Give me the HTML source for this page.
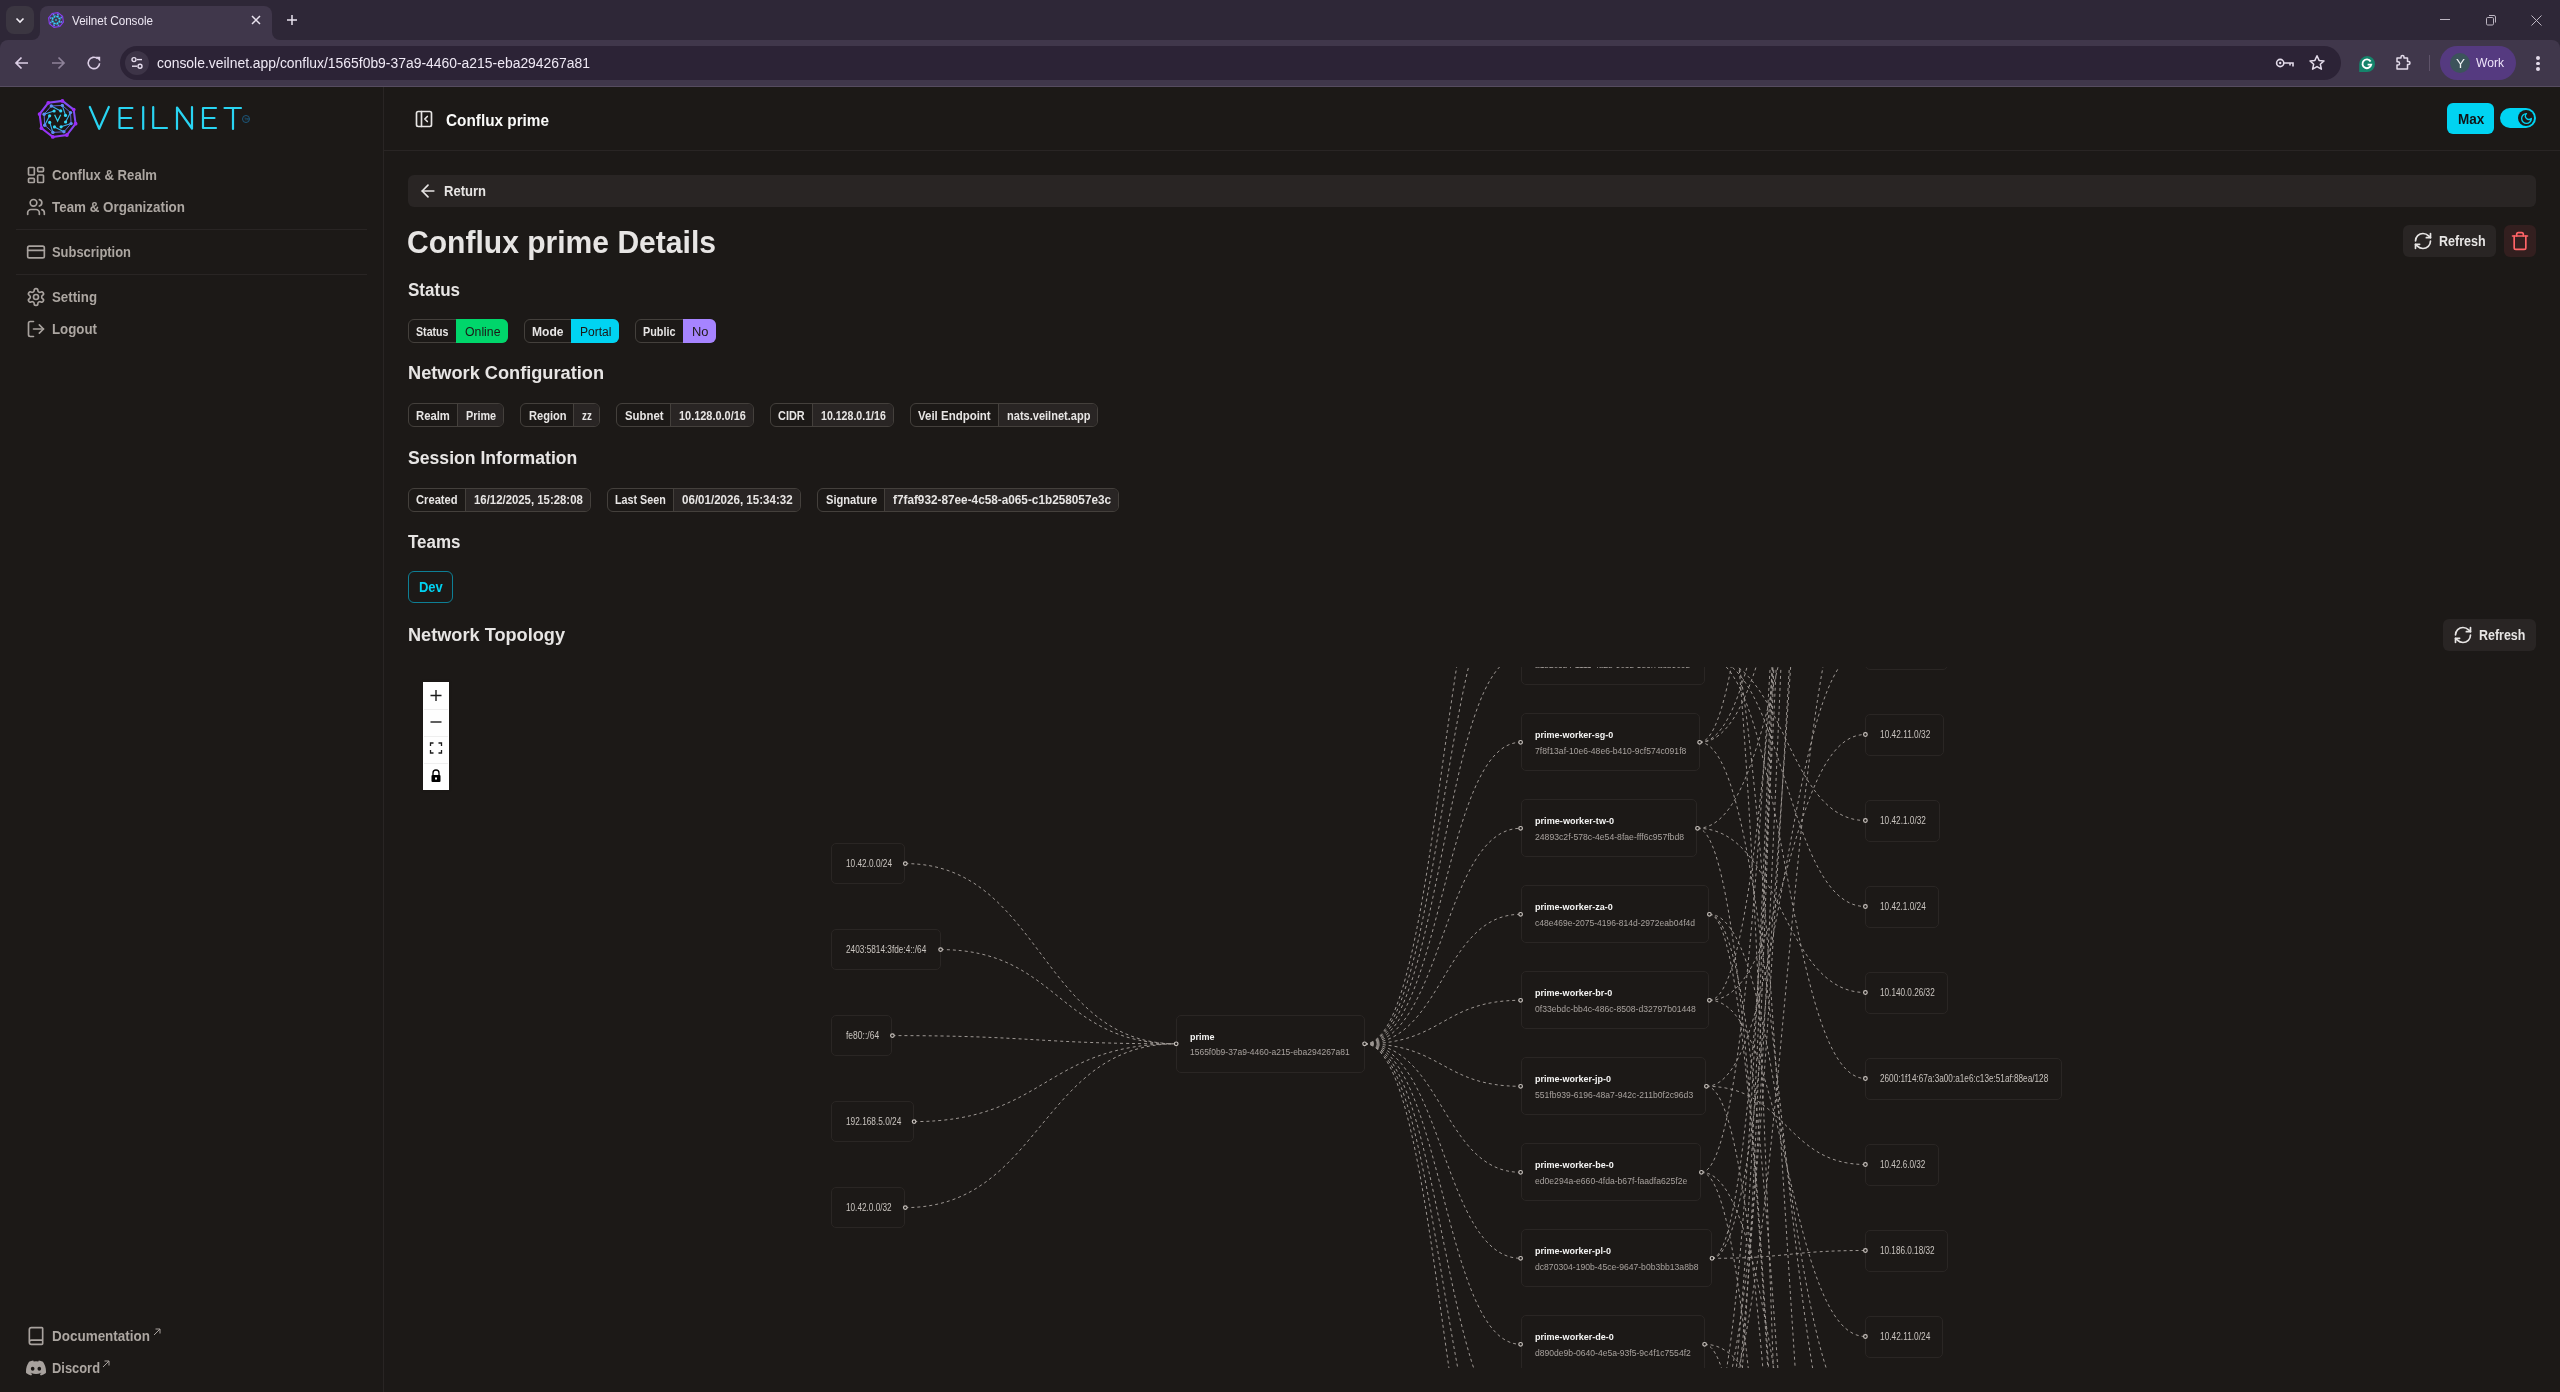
<!DOCTYPE html><html><head><meta charset="utf-8"><title>Veilnet Console</title><style>html,body{margin:0;padding:0;width:2560px;height:1392px;overflow:hidden;background:#1c1917;font-family:"Liberation Sans",sans-serif}</style></head><body><div style="position:absolute;left:0;top:0;width:2560px;height:1392px;will-change:transform"><div style="position:absolute;left:0;top:0;width:2560px;height:48px;background:#2e2737"></div>
<div style="position:absolute;left:0;top:40px;width:2560px;height:47px;background:#40374b;border-radius:8px 8px 0 0"></div>
<div style="position:absolute;left:40px;top:6px;width:232px;height:40px;background:#40374b;border-radius:8px 8px 0 0"></div>
<div style="position:absolute;left:32px;top:32px;width:8px;height:8px;background:#40374b"></div><div style="position:absolute;left:32px;top:32px;width:8px;height:8px;background:#2e2737;border-radius:0 0 8px 0"></div>
<div style="position:absolute;left:272px;top:32px;width:8px;height:8px;background:#40374b"></div><div style="position:absolute;left:272px;top:32px;width:8px;height:8px;background:#2e2737;border-radius:0 0 0 8px"></div>
<div style="position:absolute;left:6px;top:6px;width:28px;height:28px;border-radius:8px;background:#3b3641"></div>
<svg style="position:absolute;left:14px;top:14px" width="12" height="12" viewBox="0 0 12 12"><path d="M2.5 4.5 L6 8 L9.5 4.5" fill="none" stroke="#f2eef6" stroke-width="1.6"/></svg>
<svg style="position:absolute;left:0;top:0" width="100" height="40" viewBox="0 0 100 40"><polygon points="58.0,12.6 62.6,16.2 63.4,22.0 59.8,26.6 54.0,27.4 49.4,23.8 48.6,18.0 52.2,13.4" fill="none" stroke="#8a3cf5" stroke-width="1.1"/><path d="M54.6 16.8 L50.5 18.1" stroke="#3bb0f0" stroke-width="0.7"/><path d="M57.3 16.7 L53.4 14.7" stroke="#3bb0f0" stroke-width="0.7"/><path d="M59.2 18.6 L57.9 14.5" stroke="#3bb0f0" stroke-width="0.7"/><path d="M59.3 21.3 L61.3 17.4" stroke="#3bb0f0" stroke-width="0.7"/><path d="M57.4 23.2 L61.5 21.9" stroke="#3bb0f0" stroke-width="0.7"/><path d="M54.7 23.3 L58.6 25.3" stroke="#3bb0f0" stroke-width="0.7"/><path d="M52.8 21.4 L54.1 25.5" stroke="#3bb0f0" stroke-width="0.7"/><path d="M52.7 18.7 L50.7 22.6" stroke="#3bb0f0" stroke-width="0.7"/><circle cx="53.4" cy="14.7" r="0.9" fill="#5e8ef5"/><circle cx="57.9" cy="14.5" r="0.9" fill="#5e8ef5"/><circle cx="61.3" cy="17.4" r="0.9" fill="#5e8ef5"/><circle cx="61.5" cy="21.9" r="0.9" fill="#5e8ef5"/><circle cx="58.6" cy="25.3" r="0.9" fill="#5e8ef5"/><circle cx="54.1" cy="25.5" r="0.9" fill="#5e8ef5"/><circle cx="50.7" cy="22.6" r="0.9" fill="#5e8ef5"/><circle cx="50.5" cy="18.1" r="0.9" fill="#5e8ef5"/><circle cx="54.6" cy="16.8" r="0.9" fill="#33d9f6"/><circle cx="57.3" cy="16.7" r="0.9" fill="#33d9f6"/><circle cx="59.2" cy="18.6" r="0.9" fill="#33d9f6"/><circle cx="59.3" cy="21.3" r="0.9" fill="#33d9f6"/><circle cx="57.4" cy="23.2" r="0.9" fill="#33d9f6"/><circle cx="54.7" cy="23.3" r="0.9" fill="#33d9f6"/><circle cx="52.8" cy="21.4" r="0.9" fill="#33d9f6"/><circle cx="52.7" cy="18.7" r="0.9" fill="#33d9f6"/><circle cx="56" cy="20" r="1" fill="#2fb0d0"/></svg>
<span style="position:absolute;left:72.0px;top:14.80px;font-family:'Liberation Sans',sans-serif;font-size:12px;font-weight:400;line-height:1;color:#ece6f2;white-space:pre;transform-origin:0 0;transform:scaleX(0.9713)">Veilnet Console</span>
<svg style="position:absolute;left:251px;top:15px" width="10" height="10" viewBox="0 0 10 10"><path d="M1 1 L9 9 M9 1 L1 9" stroke="#e9e3ef" stroke-width="1.5"/></svg>
<svg style="position:absolute;left:286px;top:14px" width="12" height="12" viewBox="0 0 12 12"><path d="M6 1 V11 M1 6 H11" stroke="#e9e3ef" stroke-width="1.5"/></svg>
<div style="position:absolute;left:2440px;top:19px;width:10px;height:1px;background:#bdb6c2"></div>
<svg style="position:absolute;left:2484px;top:13px" width="14" height="14" viewBox="0 0 14 14"><rect x="2.5" y="4.5" width="7" height="7.5" rx="1.2" fill="none" stroke="#bdb6c2" stroke-width="1"/><path d="M5 2.5 H10 Q11.5 2.5 11.5 4 V9.5" fill="none" stroke="#bdb6c2" stroke-width="1"/></svg>
<svg style="position:absolute;left:2530px;top:14px" width="13" height="13" viewBox="0 0 13 13"><path d="M1.5 1.5 L11.5 11.5 M11.5 1.5 L1.5 11.5" stroke="#bdb6c2" stroke-width="1"/></svg>
<svg style="position:absolute;left:13px;top:54px" width="18" height="18" viewBox="0 0 18 18"><path d="M15 9 H3.5 M8.5 3.5 L3 9 L8.5 14.5" fill="none" stroke="#dccfe6" stroke-width="1.7"/></svg>
<svg style="position:absolute;left:49px;top:54px" width="18" height="18" viewBox="0 0 18 18"><path d="M3 9 H14.5 M9.5 3.5 L15 9 L9.5 14.5" fill="none" stroke="#8e8299" stroke-width="1.7"/></svg>
<svg style="position:absolute;left:85px;top:54px" width="18" height="18" viewBox="0 0 18 18"><path d="M14.6 9.2 A5.7 5.7 0 1 1 12.6 4.6" fill="none" stroke="#dccfe6" stroke-width="1.6"/><path d="M10.6 2.8 H15.2 V7.4 Z" fill="#dccfe6"/></svg>
<div style="position:absolute;left:120px;top:46px;width:2221px;height:34px;border-radius:17px;background:#2c2336"></div>
<div style="position:absolute;left:125px;top:51px;width:24px;height:24px;border-radius:12px;background:#3d3447"></div>
<svg style="position:absolute;left:129px;top:55px" width="16" height="16" viewBox="0 0 16 16"><circle cx="5" cy="4.6" r="2" fill="none" stroke="#e6ddee" stroke-width="1.4"/><path d="M8 4.6 H13" stroke="#e6ddee" stroke-width="1.4"/><circle cx="11" cy="11.2" r="2" fill="none" stroke="#e6ddee" stroke-width="1.4"/><path d="M3 11.2 H8" stroke="#e6ddee" stroke-width="1.4"/></svg>
<span style="position:absolute;left:157.0px;top:56.10px;font-family:'Liberation Sans',sans-serif;font-size:14px;font-weight:400;line-height:1;color:#efe9f5;white-space:pre;transform-origin:0 0;transform:scaleX(0.9933)">console.veilnet.app/conflux/1565f0b9-37a9-4460-a215-eba294267a81</span>
<svg style="position:absolute;left:2275px;top:55px" width="20" height="16" viewBox="0 0 20 16"><circle cx="5.2" cy="8" r="3.6" fill="none" stroke="#e3dbea" stroke-width="1.6"/><circle cx="5.2" cy="8" r="1.2" fill="#e3dbea"/><path d="M8.8 8 H18 V11.5 M15 8 V10.5" fill="none" stroke="#e3dbea" stroke-width="1.6"/></svg>
<svg style="position:absolute;left:2308px;top:54px" width="18" height="18" viewBox="0 0 18 18"><path d="M9 1.8 L11.1 6.4 L16 6.9 L12.3 10.2 L13.4 15.2 L9 12.6 L4.6 15.2 L5.7 10.2 L2 6.9 L6.9 6.4 Z" fill="none" stroke="#e3dbea" stroke-width="1.5" stroke-linejoin="round"/></svg>
<svg style="position:absolute;left:2358px;top:55px" width="18" height="18" viewBox="0 0 18 18"><path d="M9 1 A8 8 0 1 1 9 17 H1.2 V9 A8 8 0 0 1 9 1 Z" fill="#15846b"/><path d="M12.6 6.4 A4.4 4.4 0 1 0 13.2 9.6 H9.6" fill="none" stroke="#fff" stroke-width="1.9"/></svg>
<svg style="position:absolute;left:2394px;top:54px" width="18" height="18" viewBox="0 0 18 18"><path d="M3 4 H7 V3 A1.5 1.5 0 0 1 10 3 V4 H13.5 V7.5 H14.5 A1.5 1.5 0 0 1 14.5 10.5 H13.5 V15 H3 V11 H4 A1.6 1.6 0 0 0 4 7.8 H3 Z" fill="none" stroke="#e3dbea" stroke-width="1.5" stroke-linejoin="round"/></svg>
<div style="position:absolute;left:2429px;top:55px;width:1px;height:16px;background:#5e5369"></div>
<div style="position:absolute;left:2440px;top:46px;width:76px;height:34px;border-radius:17px;background:#553a80"></div>
<div style="position:absolute;left:2450px;top:53px;width:20px;height:20px;border-radius:10px;background:#3c535b"></div>
<span style="position:absolute;left:2455.5px;top:57.80px;font-family:'Liberation Sans',sans-serif;font-size:12px;font-weight:400;line-height:1;color:#eef2f4;white-space:pre;transform-origin:0 0;transform:scaleX(1.1228)">Y</span>
<span style="position:absolute;left:2476.0px;top:56.45px;font-family:'Liberation Sans',sans-serif;font-size:13px;font-weight:400;line-height:1;color:#eee4fa;white-space:pre;transform-origin:0 0;transform:scaleX(0.9299)">Work</span>
<div style="position:absolute;left:2536px;top:56px;width:3.5px;height:3.5px;border-radius:2px;background:#e3dbea"></div><div style="position:absolute;left:2536px;top:61.5px;width:3.5px;height:3.5px;border-radius:2px;background:#e3dbea"></div><div style="position:absolute;left:2536px;top:67px;width:3.5px;height:3.5px;border-radius:2px;background:#e3dbea"></div>
<div style="position:absolute;left:0;top:86px;width:2560px;height:1px;background:#564c60"></div>
<div style="position:absolute;left:0;top:87px;width:2560px;height:1305px;background:#1c1917"></div>
<div style="position:absolute;left:383px;top:87px;width:1px;height:1305px;background:#292524"></div>
<div style="position:absolute;left:384px;top:150px;width:2176px;height:1px;background:#292524"></div>
<svg style="position:absolute;left:0;top:87px" width="383" height="70" viewBox="0 87 383 70">
<g fill="none" stroke="#29d4f2" stroke-width="2.2" stroke-linecap="round" stroke-linejoin="round">
<path d="M89.8 107 L99.2 128.8 L108.8 107"/>
<path d="M132.4 108 H119.5 V128 H132.4 M119.5 118 H131"/>
<path d="M143.2 107 V129"/>
<path d="M153.2 107 V128 H167"/>
<path d="M177 129 V107.5 L192 128.5 V107"/>
<path d="M216 108 H203 V128 H216 M203 118 H214.5"/>
<path d="M224.5 108 H241 M233 108 V129"/>
</g>
<circle cx="246" cy="119" r="3.5" fill="none" stroke="#1d5f86" stroke-width="0.9"/><path d="M244.3 118 H246.3 M245.3 118 V120.5 M246.8 120.5 V118 L247.6 119.5 L248.2 118 V120.5" fill="none" stroke="#1d5f86" stroke-width="0.5"/>
</svg>
<svg style="position:absolute;left:0;top:87px" width="100" height="70" viewBox="0 87 100 70"><defs><linearGradient id="lg" x1="0" y1="1" x2="1" y2="0"><stop offset="0" stop-color="#9d2cf7"/><stop offset="1" stop-color="#7a55f4"/></linearGradient></defs><polygon points="62.4,100.9 73.7,109.6 75.6,123.7 66.9,135.0 52.8,136.9 41.5,128.2 39.6,114.1 48.3,102.8" fill="none" stroke="url(#lg)" stroke-width="2"/><polygon points="51.3,106.0 62.3,105.4 70.5,112.6 71.1,123.6 63.9,131.8 52.9,132.4 44.7,125.2 44.1,114.2" fill="none" stroke="#6a6df2" stroke-width="0.9"/><circle cx="62.4" cy="100.9" r="1.9" fill="#9d2cf7"/><circle cx="73.7" cy="109.6" r="1.9" fill="#9d2cf7"/><circle cx="75.6" cy="123.7" r="1.9" fill="#9d2cf7"/><circle cx="66.9" cy="135.0" r="1.9" fill="#9d2cf7"/><circle cx="52.8" cy="136.9" r="1.9" fill="#9d2cf7"/><circle cx="41.5" cy="128.2" r="1.9" fill="#9d2cf7"/><circle cx="39.6" cy="114.1" r="1.9" fill="#9d2cf7"/><circle cx="48.3" cy="102.8" r="1.9" fill="#9d2cf7"/><path d="M54.1 111.0 L44.1 114.2" fill="none" stroke="#3bb0f0" stroke-width="1.1"/><path d="M60.7 110.9 L51.3 106.0" fill="none" stroke="#3bb0f0" stroke-width="1.1"/><path d="M65.5 115.4 L62.3 105.4" fill="none" stroke="#3bb0f0" stroke-width="1.1"/><path d="M65.6 122.0 L70.5 112.6" fill="none" stroke="#3bb0f0" stroke-width="1.1"/><path d="M61.1 126.8 L71.1 123.6" fill="none" stroke="#3bb0f0" stroke-width="1.1"/><path d="M54.5 126.9 L63.9 131.8" fill="none" stroke="#3bb0f0" stroke-width="1.1"/><path d="M49.7 122.4 L52.9 132.4" fill="none" stroke="#3bb0f0" stroke-width="1.1"/><path d="M49.6 115.8 L44.7 125.2" fill="none" stroke="#3bb0f0" stroke-width="1.1"/><circle cx="51.3" cy="106.0" r="1.7" fill="#5e8ef5"/><circle cx="62.3" cy="105.4" r="1.7" fill="#5e8ef5"/><circle cx="70.5" cy="112.6" r="1.7" fill="#5e8ef5"/><circle cx="71.1" cy="123.6" r="1.7" fill="#5e8ef5"/><circle cx="63.9" cy="131.8" r="1.7" fill="#5e8ef5"/><circle cx="52.9" cy="132.4" r="1.7" fill="#5e8ef5"/><circle cx="44.7" cy="125.2" r="1.7" fill="#5e8ef5"/><circle cx="44.1" cy="114.2" r="1.7" fill="#5e8ef5"/><circle cx="54.1" cy="111.0" r="1.6" fill="#33d9f6"/><circle cx="60.7" cy="110.9" r="1.6" fill="#33d9f6"/><circle cx="65.5" cy="115.4" r="1.6" fill="#33d9f6"/><circle cx="65.6" cy="122.0" r="1.6" fill="#33d9f6"/><circle cx="61.1" cy="126.8" r="1.6" fill="#33d9f6"/><circle cx="54.5" cy="126.9" r="1.6" fill="#33d9f6"/><circle cx="49.7" cy="122.4" r="1.6" fill="#33d9f6"/><circle cx="49.6" cy="115.8" r="1.6" fill="#33d9f6"/><path d="M54.6 114.8 L57.6 121.1 L60.7 114.8" fill="none" stroke="#2fd0ee" stroke-width="1.2"/></svg>
<svg style="position:absolute;left:26px;top:165px" width="20" height="20" viewBox="0 0 24 24" fill="none" stroke="#a8a29e" stroke-width="2" stroke-linecap="round" stroke-linejoin="round"><rect width="7" height="9" x="3" y="3" rx="1"/><rect width="7" height="5" x="14" y="3" rx="1"/><rect width="7" height="9" x="14" y="12" rx="1"/><rect width="7" height="5" x="3" y="16" rx="1"/></svg>
<span style="position:absolute;left:52.0px;top:168.10px;font-family:'Liberation Sans',sans-serif;font-size:14px;font-weight:700;line-height:1;color:#aca6a1;white-space:pre;transform-origin:0 0;transform:scaleX(0.9374)">Conflux &amp; Realm</span>
<svg style="position:absolute;left:26px;top:197px" width="20" height="20" viewBox="0 0 24 24" fill="none" stroke="#a8a29e" stroke-width="2" stroke-linecap="round" stroke-linejoin="round"><path d="M16 21v-2a4 4 0 0 0-4-4H6a4 4 0 0 0-4 4v2"/><circle cx="9" cy="7" r="4"/><path d="M22 21v-2a4 4 0 0 0-3-3.87"/><path d="M16 3.13a4 4 0 0 1 0 7.75"/></svg>
<span style="position:absolute;left:52.0px;top:200.10px;font-family:'Liberation Sans',sans-serif;font-size:14px;font-weight:700;line-height:1;color:#aca6a1;white-space:pre;transform-origin:0 0;transform:scaleX(0.9569)">Team &amp; Organization</span>
<div style="position:absolute;left:16px;top:229px;width:351px;height:1px;background:#292524"></div>
<svg style="position:absolute;left:26px;top:242px" width="20" height="20" viewBox="0 0 24 24" fill="none" stroke="#a8a29e" stroke-width="2" stroke-linecap="round" stroke-linejoin="round"><rect width="20" height="14" x="2" y="5" rx="2"/><line x1="2" x2="22" y1="10" y2="10"/></svg>
<span style="position:absolute;left:52.0px;top:245.10px;font-family:'Liberation Sans',sans-serif;font-size:14px;font-weight:700;line-height:1;color:#aca6a1;white-space:pre;transform-origin:0 0;transform:scaleX(0.9233)">Subscription</span>
<div style="position:absolute;left:16px;top:274px;width:351px;height:1px;background:#292524"></div>
<svg style="position:absolute;left:26px;top:287px" width="20" height="20" viewBox="0 0 24 24" fill="none" stroke="#a8a29e" stroke-width="2" stroke-linecap="round" stroke-linejoin="round"><path d="M12.22 2h-.44a2 2 0 0 0-2 2v.18a2 2 0 0 1-1 1.73l-.43.25a2 2 0 0 1-2 0l-.15-.08a2 2 0 0 0-2.73.73l-.22.38a2 2 0 0 0 .73 2.73l.15.1a2 2 0 0 1 1 1.72v.51a2 2 0 0 1-1 1.74l-.15.09a2 2 0 0 0-.73 2.73l.22.38a2 2 0 0 0 2.73.73l.15-.08a2 2 0 0 1 2 0l.43.25a2 2 0 0 1 1 1.73V20a2 2 0 0 0 2 2h.44a2 2 0 0 0 2-2v-.18a2 2 0 0 1 1-1.73l.43-.25a2 2 0 0 1 2 0l.15.08a2 2 0 0 0 2.73-.73l.22-.39a2 2 0 0 0-.73-2.73l-.15-.08a2 2 0 0 1-1-1.74v-.5a2 2 0 0 1 1-1.74l.15-.09a2 2 0 0 0 .73-2.73l-.22-.38a2 2 0 0 0-2.73-.73l-.15.08a2 2 0 0 1-2 0l-.43-.25a2 2 0 0 1-1-1.73V4a2 2 0 0 0-2-2z"/><circle cx="12" cy="12" r="3"/></svg>
<span style="position:absolute;left:52.0px;top:290.10px;font-family:'Liberation Sans',sans-serif;font-size:14px;font-weight:700;line-height:1;color:#aca6a1;white-space:pre;transform-origin:0 0;transform:scaleX(0.9483)">Setting</span>
<svg style="position:absolute;left:26px;top:319px" width="20" height="20" viewBox="0 0 24 24" fill="none" stroke="#a8a29e" stroke-width="2" stroke-linecap="round" stroke-linejoin="round"><path d="M9 21H5a2 2 0 0 1-2-2V5a2 2 0 0 1 2-2h4"/><polyline points="16 17 21 12 16 7"/><line x1="21" x2="9" y1="12" y2="12"/></svg>
<span style="position:absolute;left:52.0px;top:322.10px;font-family:'Liberation Sans',sans-serif;font-size:14px;font-weight:700;line-height:1;color:#aca6a1;white-space:pre;transform-origin:0 0;transform:scaleX(0.9489)">Logout</span>
<svg style="position:absolute;left:26px;top:1326px" width="20" height="20" viewBox="0 0 24 24" fill="none" stroke="#a8a29e" stroke-width="2" stroke-linecap="round" stroke-linejoin="round"><path d="M4 19.5v-15A2.5 2.5 0 0 1 6.5 2H19a1 1 0 0 1 1 1v18a1 1 0 0 1-1 1H6.5a1 1 0 0 1 0-5H20"/></svg>
<span style="position:absolute;left:52.0px;top:1329.10px;font-family:'Liberation Sans',sans-serif;font-size:14px;font-weight:700;line-height:1;color:#aca6a1;white-space:pre;transform-origin:0 0;transform:scaleX(0.9618)">Documentation</span>
<svg style="position:absolute;left:153px;top:1328px" width="8" height="8" viewBox="0 0 8 8"><path d="M1 7 L7 1 M2.5 1 H7 V5.5" fill="none" stroke="#a8a29e" stroke-width="1"/></svg>
<svg style="position:absolute;left:26px;top:1360px" width="20" height="16" viewBox="0 0 127.14 96.36"><path fill="#a8a29e" d="M107.7,8.07A105.15,105.15,0,0,0,81.47,0a72.06,72.06,0,0,0-3.36,6.83A97.68,97.68,0,0,0,49,6.83,72.37,72.37,0,0,0,45.64,0,105.89,105.89,0,0,0,19.39,8.09C2.79,32.65-1.71,56.6.54,80.21h0A105.73,105.73,0,0,0,32.71,96.36,77.7,77.7,0,0,0,39.6,85.25a68.42,68.42,0,0,1-10.85-5.18c.91-.66,1.8-1.34,2.66-2a75.57,75.57,0,0,0,64.32,0c.87.71,1.76,1.39,2.66,2a68.68,68.68,0,0,1-10.87,5.19,77,77,0,0,0,6.89,11.1A105.25,105.25,0,0,0,126.6,80.22h0C129.24,52.84,122.09,29.11,107.7,8.07ZM42.45,65.69C36.18,65.69,31,60,31,53s5-12.74,11.43-12.74S54,46,53.89,53,48.84,65.69,42.45,65.69Zm42.24,0C78.41,65.69,73.25,60,73.25,53s5-12.74,11.44-12.74S96.23,46,96.12,53,91.08,65.69,84.69,65.69Z"/></svg>
<span style="position:absolute;left:52.0px;top:1361.10px;font-family:'Liberation Sans',sans-serif;font-size:14px;font-weight:700;line-height:1;color:#aca6a1;white-space:pre;transform-origin:0 0;transform:scaleX(0.9209)">Discord</span>
<svg style="position:absolute;left:102px;top:1360px" width="8" height="8" viewBox="0 0 8 8"><path d="M1 7 L7 1 M2.5 1 H7 V5.5" fill="none" stroke="#a8a29e" stroke-width="1"/></svg>
<svg style="position:absolute;left:414px;top:109px" width="20" height="20" viewBox="0 0 24 24" fill="none" stroke="#e7e5e4" stroke-width="2" stroke-linecap="round" stroke-linejoin="round"><rect width="18" height="18" x="3" y="3" rx="2"/><path d="M9 3v18"/><path d="m16 15-3-3 3-3"/></svg>
<span style="position:absolute;left:445.5px;top:112.90px;font-family:'Liberation Sans',sans-serif;font-size:16px;font-weight:700;line-height:1;color:#fafaf9;white-space:pre;transform-origin:0 0;transform:scaleX(0.9576)">Conflux prime</span>
<div style="position:absolute;left:2447px;top:103px;width:47px;height:31px;border-radius:6px;background:#00d3f2"></div>
<span style="position:absolute;left:2457.6px;top:112.10px;font-family:'Liberation Sans',sans-serif;font-size:14px;font-weight:700;line-height:1;color:#111417;white-space:pre;transform-origin:0 0;transform:scaleX(0.9657)">Max</span>
<div style="position:absolute;left:2500px;top:108px;width:36px;height:20px;border-radius:10px;background:#00d3f2"></div>
<div style="position:absolute;left:2518px;top:110px;width:16px;height:16px;border-radius:8px;background:#1c1917"></div>
<svg style="position:absolute;left:2519.5px;top:111.5px" width="13" height="13" viewBox="0 0 24 24" fill="none" stroke="#00d3f2" stroke-width="2.4" stroke-linecap="round" stroke-linejoin="round"><path d="M12 3a6 6 0 0 0 9 9 9 9 0 1 1-9-9Z"/></svg>
<div style="position:absolute;left:408px;top:175px;width:2128px;height:32px;border-radius:6px;background:#292524"></div>
<svg style="position:absolute;left:417.5px;top:181px" width="20" height="20" viewBox="0 0 24 24" fill="none" stroke="#e7e5e4" stroke-width="2" stroke-linecap="round" stroke-linejoin="round"><path d="m12 19-7-7 7-7"/><path d="M19 12H5"/></svg>
<span style="position:absolute;left:444.3px;top:184.10px;font-family:'Liberation Sans',sans-serif;font-size:14px;font-weight:700;line-height:1;color:#e7e5e4;white-space:pre;transform-origin:0 0;transform:scaleX(0.9307)">Return</span>
<span style="position:absolute;left:407.0px;top:227.15px;font-family:'Liberation Sans',sans-serif;font-size:31px;font-weight:700;line-height:1;color:#e7e5e4;white-space:pre;transform-origin:0 0;transform:scaleX(0.9696)">Conflux prime Details</span>
<div style="position:absolute;left:2403px;top:225px;width:93px;height:32px;border-radius:6px;background:#292524"></div>
<svg style="position:absolute;left:2413px;top:231px" width="20" height="20" viewBox="0 0 24 24" fill="none" stroke="#e7e5e4" stroke-width="2" stroke-linecap="round" stroke-linejoin="round"><path d="M3 12a9 9 0 0 1 9-9 9.75 9.75 0 0 1 6.74 2.74L21 8"/><path d="M21 3v5h-5"/><path d="M21 12a9 9 0 0 1-9 9 9.75 9.75 0 0 1-6.74-2.74L3 16"/><path d="M8 16H3v5"/></svg>
<span style="position:absolute;left:2439.1px;top:234.10px;font-family:'Liberation Sans',sans-serif;font-size:14px;font-weight:700;line-height:1;color:#e7e5e4;white-space:pre;transform-origin:0 0;transform:scaleX(0.8937)">Refresh</span>
<div style="position:absolute;left:2504px;top:225px;width:32px;height:32px;border-radius:6px;background:#331f1f"></div>
<svg style="position:absolute;left:2510px;top:231px" width="20" height="20" viewBox="0 0 24 24" fill="none" stroke="#ff6467" stroke-width="2" stroke-linecap="round" stroke-linejoin="round"><path d="M3 6h18"/><path d="M19 6v14c0 1-1 2-2 2H7c-1 0-2-1-2-2V6"/><path d="M8 6V4c0-1 1-2 2-2h4c1 0 2 1 2 2v2"/></svg>
<span style="position:absolute;left:408.4px;top:280.70px;font-family:'Liberation Sans',sans-serif;font-size:18px;font-weight:700;line-height:1;color:#e7e5e4;white-space:pre;transform-origin:0 0;transform:scaleX(0.9452)">Status</span>
<span style="position:absolute;left:408.4px;top:364.40px;font-family:'Liberation Sans',sans-serif;font-size:18px;font-weight:700;line-height:1;color:#e7e5e4;white-space:pre;transform-origin:0 0;transform:scaleX(1.0103)">Network Configuration</span>
<span style="position:absolute;left:408.4px;top:448.50px;font-family:'Liberation Sans',sans-serif;font-size:18px;font-weight:700;line-height:1;color:#e7e5e4;white-space:pre;transform-origin:0 0;transform:scaleX(0.9784)">Session Information</span>
<span style="position:absolute;left:408.4px;top:532.60px;font-family:'Liberation Sans',sans-serif;font-size:18px;font-weight:700;line-height:1;color:#e7e5e4;white-space:pre;transform-origin:0 0;transform:scaleX(0.9425)">Teams</span>
<span style="position:absolute;left:408.4px;top:626.40px;font-family:'Liberation Sans',sans-serif;font-size:18px;font-weight:700;line-height:1;color:#e7e5e4;white-space:pre;transform-origin:0 0;transform:scaleX(1.0085)">Network Topology</span>
<div style="position:absolute;left:408px;top:319px;width:100px;height:24px;border-radius:6px;overflow:hidden;box-sizing:border-box;border:1px solid #44403c"></div>
<div style="position:absolute;left:456px;top:319px;width:52px;height:24px;border-radius:0 6px 6px 0;background:#00d66b"></div>
<span style="position:absolute;left:416.2px;top:325.80px;font-family:'Liberation Sans',sans-serif;font-size:12px;font-weight:700;line-height:1;color:#e7e5e4;white-space:pre;transform-origin:0 0;transform:scaleX(0.8859)">Status</span>
<span style="position:absolute;left:464.6px;top:325.80px;font-family:'Liberation Sans',sans-serif;font-size:12px;font-weight:400;line-height:1;color:#1c1917;white-space:pre;transform-origin:0 0;transform:scaleX(1.0234)">Online</span>
<div style="position:absolute;left:524px;top:319px;width:95px;height:24px;border-radius:6px;overflow:hidden;box-sizing:border-box;border:1px solid #44403c"></div>
<div style="position:absolute;left:571px;top:319px;width:48px;height:24px;border-radius:0 6px 6px 0;background:#00d3f2"></div>
<span style="position:absolute;left:532.2px;top:325.80px;font-family:'Liberation Sans',sans-serif;font-size:12px;font-weight:700;line-height:1;color:#e7e5e4;white-space:pre;transform-origin:0 0;transform:scaleX(1.0050)">Mode</span>
<span style="position:absolute;left:579.6px;top:325.80px;font-family:'Liberation Sans',sans-serif;font-size:12px;font-weight:400;line-height:1;color:#1c1917;white-space:pre;transform-origin:0 0;transform:scaleX(1.0045)">Portal</span>
<div style="position:absolute;left:635px;top:319px;width:81px;height:24px;border-radius:6px;overflow:hidden;box-sizing:border-box;border:1px solid #44403c"></div>
<div style="position:absolute;left:683px;top:319px;width:33px;height:24px;border-radius:0 6px 6px 0;background:#a684ff"></div>
<span style="position:absolute;left:643.2px;top:325.80px;font-family:'Liberation Sans',sans-serif;font-size:12px;font-weight:700;line-height:1;color:#e7e5e4;white-space:pre;transform-origin:0 0;transform:scaleX(0.9024)">Public</span>
<span style="position:absolute;left:691.6px;top:325.80px;font-family:'Liberation Sans',sans-serif;font-size:12px;font-weight:400;line-height:1;color:#1c1917;white-space:pre;transform-origin:0 0;transform:scaleX(1.0754)">No</span>
<div style="position:absolute;left:408px;top:403px;width:96px;height:24px;border-radius:6px;overflow:hidden;box-sizing:border-box;border:1px solid #44403c"><div style="position:absolute;left:48.39999999999998px;top:0;right:0;bottom:0;background:#292524;border-left:1px solid #44403c"></div></div>
<span style="position:absolute;left:416.2px;top:409.80px;font-family:'Liberation Sans',sans-serif;font-size:12px;font-weight:700;line-height:1;color:#e7e5e4;white-space:pre;transform-origin:0 0;transform:scaleX(0.9408)">Realm</span>
<span style="position:absolute;left:466.0px;top:409.80px;font-family:'Liberation Sans',sans-serif;font-size:12px;font-weight:700;line-height:1;color:#e7e5e4;white-space:pre;transform-origin:0 0;transform:scaleX(0.9023)">Prime</span>
<div style="position:absolute;left:520.3px;top:403px;width:79.40000000000009px;height:24px;border-radius:6px;overflow:hidden;box-sizing:border-box;border:1px solid #44403c"><div style="position:absolute;left:52.10000000000002px;top:0;right:0;bottom:0;background:#292524;border-left:1px solid #44403c"></div></div>
<span style="position:absolute;left:528.5px;top:409.80px;font-family:'Liberation Sans',sans-serif;font-size:12px;font-weight:700;line-height:1;color:#e7e5e4;white-space:pre;transform-origin:0 0;transform:scaleX(0.9245)">Region</span>
<span style="position:absolute;left:582.0px;top:409.80px;font-family:'Liberation Sans',sans-serif;font-size:12px;font-weight:700;line-height:1;color:#e7e5e4;white-space:pre;transform-origin:0 0;transform:scaleX(0.8167)">zz</span>
<div style="position:absolute;left:616.3px;top:403px;width:137.4000000000001px;height:24px;border-radius:6px;overflow:hidden;box-sizing:border-box;border:1px solid #44403c"><div style="position:absolute;left:53.0px;top:0;right:0;bottom:0;background:#292524;border-left:1px solid #44403c"></div></div>
<span style="position:absolute;left:624.5px;top:409.80px;font-family:'Liberation Sans',sans-serif;font-size:12px;font-weight:700;line-height:1;color:#e7e5e4;white-space:pre;transform-origin:0 0;transform:scaleX(0.9466)">Subnet</span>
<span style="position:absolute;left:678.9px;top:409.80px;font-family:'Liberation Sans',sans-serif;font-size:12px;font-weight:700;line-height:1;color:#e7e5e4;white-space:pre;transform-origin:0 0;transform:scaleX(0.9114)">10.128.0.0/16</span>
<div style="position:absolute;left:770.1px;top:403px;width:123.5px;height:24px;border-radius:6px;overflow:hidden;box-sizing:border-box;border:1px solid #44403c"><div style="position:absolute;left:41.19999999999993px;top:0;right:0;bottom:0;background:#292524;border-left:1px solid #44403c"></div></div>
<span style="position:absolute;left:778.3px;top:409.80px;font-family:'Liberation Sans',sans-serif;font-size:12px;font-weight:700;line-height:1;color:#e7e5e4;white-space:pre;transform-origin:0 0;transform:scaleX(0.9099)">CIDR</span>
<span style="position:absolute;left:820.9px;top:409.80px;font-family:'Liberation Sans',sans-serif;font-size:12px;font-weight:700;line-height:1;color:#e7e5e4;white-space:pre;transform-origin:0 0;transform:scaleX(0.8828)">10.128.0.1/16</span>
<div style="position:absolute;left:910.2px;top:403px;width:188.0999999999999px;height:24px;border-radius:6px;overflow:hidden;box-sizing:border-box;border:1px solid #44403c"><div style="position:absolute;left:87.19999999999993px;top:0;right:0;bottom:0;background:#292524;border-left:1px solid #44403c"></div></div>
<span style="position:absolute;left:918.4px;top:409.80px;font-family:'Liberation Sans',sans-serif;font-size:12px;font-weight:700;line-height:1;color:#e7e5e4;white-space:pre;transform-origin:0 0;transform:scaleX(0.9564)">Veil Endpoint</span>
<span style="position:absolute;left:1007.0px;top:409.80px;font-family:'Liberation Sans',sans-serif;font-size:12px;font-weight:700;line-height:1;color:#e7e5e4;white-space:pre;transform-origin:0 0;transform:scaleX(0.9195)">nats.veilnet.app</span>
<div style="position:absolute;left:408.2px;top:487.5px;width:182.40000000000003px;height:24px;border-radius:6px;overflow:hidden;box-sizing:border-box;border:1px solid #44403c"><div style="position:absolute;left:56.10000000000002px;top:0;right:0;bottom:0;background:#292524;border-left:1px solid #44403c"></div></div>
<span style="position:absolute;left:416.4px;top:494.30px;font-family:'Liberation Sans',sans-serif;font-size:12px;font-weight:700;line-height:1;color:#e7e5e4;white-space:pre;transform-origin:0 0;transform:scaleX(0.9309)">Created</span>
<span style="position:absolute;left:473.9px;top:494.30px;font-family:'Liberation Sans',sans-serif;font-size:12px;font-weight:700;line-height:1;color:#e7e5e4;white-space:pre;transform-origin:0 0;transform:scaleX(0.9480)">16/12/2025, 15:28:08</span>
<div style="position:absolute;left:607.2px;top:487.5px;width:193.5px;height:24px;border-radius:6px;overflow:hidden;box-sizing:border-box;border:1px solid #44403c"><div style="position:absolute;left:65.29999999999995px;top:0;right:0;bottom:0;background:#292524;border-left:1px solid #44403c"></div></div>
<span style="position:absolute;left:615.4px;top:494.30px;font-family:'Liberation Sans',sans-serif;font-size:12px;font-weight:700;line-height:1;color:#e7e5e4;white-space:pre;transform-origin:0 0;transform:scaleX(0.8959)">Last Seen</span>
<span style="position:absolute;left:682.1px;top:494.30px;font-family:'Liberation Sans',sans-serif;font-size:12px;font-weight:700;line-height:1;color:#e7e5e4;white-space:pre;transform-origin:0 0;transform:scaleX(0.9646)">06/01/2026, 15:34:32</span>
<div style="position:absolute;left:817.3px;top:487.5px;width:301.4000000000001px;height:24px;border-radius:6px;overflow:hidden;box-sizing:border-box;border:1px solid #44403c"><div style="position:absolute;left:65.80000000000007px;top:0;right:0;bottom:0;background:#292524;border-left:1px solid #44403c"></div></div>
<span style="position:absolute;left:825.5px;top:494.30px;font-family:'Liberation Sans',sans-serif;font-size:12px;font-weight:700;line-height:1;color:#e7e5e4;white-space:pre;transform-origin:0 0;transform:scaleX(0.9269)">Signature</span>
<span style="position:absolute;left:892.7px;top:494.30px;font-family:'Liberation Sans',sans-serif;font-size:12px;font-weight:700;line-height:1;color:#e7e5e4;white-space:pre;transform-origin:0 0;transform:scaleX(0.9817)">f7faf932-87ee-4c58-a065-c1b258057e3c</span>
<div style="position:absolute;left:408px;top:571px;width:45px;height:32px;border-radius:6px;box-sizing:border-box;border:1px solid #0e7f95"></div>
<span style="position:absolute;left:418.7px;top:580.10px;font-family:'Liberation Sans',sans-serif;font-size:14px;font-weight:700;line-height:1;color:#00d3f2;white-space:pre;transform-origin:0 0;transform:scaleX(0.9265)">Dev</span>
<div style="position:absolute;left:2443px;top:619px;width:93px;height:32px;border-radius:6px;background:#292524"></div>
<svg style="position:absolute;left:2453px;top:625px" width="20" height="20" viewBox="0 0 24 24" fill="none" stroke="#e7e5e4" stroke-width="2" stroke-linecap="round" stroke-linejoin="round"><path d="M3 12a9 9 0 0 1 9-9 9.75 9.75 0 0 1 6.74 2.74L21 8"/><path d="M21 3v5h-5"/><path d="M21 12a9 9 0 0 1-9 9 9.75 9.75 0 0 1-6.74-2.74L3 16"/><path d="M8 16H3v5"/></svg>
<span style="position:absolute;left:2479.2px;top:628.20px;font-family:'Liberation Sans',sans-serif;font-size:14px;font-weight:700;line-height:1;color:#e7e5e4;white-space:pre;transform-origin:0 0;transform:scaleX(0.8899)">Refresh</span>
<div style="position:absolute;left:408px;top:667px;width:2128px;height:701px;overflow:hidden"><div style="position:absolute;left:-408px;top:-667px;width:2560px;height:1392px">
<svg style="position:absolute;left:0;top:0" width="2560" height="1392"><g fill="none" stroke="#9d9793" stroke-width="1" stroke-dasharray="3 3">
<path d="M905.3,863.6 C1040.8,863.6 1040.8,1043.8 1176.2,1043.8"/>
<path d="M940.6,949.6 C1058.4,949.6 1058.4,1043.8 1176.2,1043.8"/>
<path d="M892.4,1035.6 C1034.3,1035.6 1034.3,1043.8 1176.2,1043.8"/>
<path d="M914.1,1121.6 C1045.2,1121.6 1045.2,1043.8 1176.2,1043.8"/>
<path d="M905.3,1207.6 C1040.8,1207.6 1040.8,1043.8 1176.2,1043.8"/>
<path d="M1364.6,1043.8 C1442.6,1043.8 1442.6,484.3 1520.6,484.3"/>
<path d="M1364.6,1043.8 C1442.6,1043.8 1442.6,570.3 1520.6,570.3"/>
<path d="M1364.6,1043.8 C1442.6,1043.8 1442.6,656.3 1520.6,656.3"/>
<path d="M1364.6,1043.8 C1442.6,1043.8 1442.6,742.3 1520.6,742.3"/>
<path d="M1364.6,1043.8 C1442.6,1043.8 1442.6,828.3 1520.6,828.3"/>
<path d="M1364.6,1043.8 C1442.6,1043.8 1442.6,914.3 1520.6,914.3"/>
<path d="M1364.6,1043.8 C1442.6,1043.8 1442.6,1000.3 1520.6,1000.3"/>
<path d="M1364.6,1043.8 C1442.6,1043.8 1442.6,1086.3 1520.6,1086.3"/>
<path d="M1364.6,1043.8 C1442.6,1043.8 1442.6,1172.3 1520.6,1172.3"/>
<path d="M1364.6,1043.8 C1442.6,1043.8 1442.6,1258.3 1520.6,1258.3"/>
<path d="M1364.6,1043.8 C1442.6,1043.8 1442.6,1344.3 1520.6,1344.3"/>
<path d="M1364.6,1043.8 C1442.6,1043.8 1442.6,1430.3 1520.6,1430.3"/>
<path d="M1364.6,1043.8 C1442.6,1043.8 1442.6,1516.3 1520.6,1516.3"/>
<path d="M1364.6,1043.8 C1442.6,1043.8 1442.6,1602.3 1520.6,1602.3"/>
<path d="M1699.6,742.3 C1782.5,742.3 1782.5,-555.5 1865.4,-555.5"/>
<path d="M1699.6,742.3 C1782.5,742.3 1782.5,218.5 1865.4,218.5"/>
<path d="M1699.6,742.3 C1782.5,742.3 1782.5,390.5 1865.4,390.5"/>
<path d="M1699.6,742.3 C1782.5,742.3 1782.5,1508.5 1865.4,1508.5"/>
<path d="M1697.5,828.3 C1781.5,828.3 1781.5,476.5 1865.4,476.5"/>
<path d="M1697.5,828.3 C1781.5,828.3 1781.5,992.5 1865.4,992.5"/>
<path d="M1697.5,828.3 C1781.5,828.3 1781.5,2368.5 1865.4,2368.5"/>
<path d="M1705.5,656.3 C1785.5,656.3 1785.5,820.5 1865.4,820.5"/>
<path d="M1705.5,656.3 C1785.5,656.3 1785.5,906.5 1865.4,906.5"/>
<path d="M1705.5,656.3 C1785.5,656.3 1785.5,1078.5 1865.4,1078.5"/>
<path d="M1709.4,914.3 C1787.4,914.3 1787.4,2110.5 1865.4,2110.5"/>
<path d="M1709.4,914.3 C1787.4,914.3 1787.4,2626.5 1865.4,2626.5"/>
<path d="M1709.4,914.3 C1787.4,914.3 1787.4,1422.5 1865.4,1422.5"/>
<path d="M1709.4,1000.3 C1787.4,1000.3 1787.4,734.5 1865.4,734.5"/>
<path d="M1709.4,1000.3 C1787.4,1000.3 1787.4,1336.5 1865.4,1336.5"/>
<path d="M1709.4,1000.3 C1787.4,1000.3 1787.4,-39.5 1865.4,-39.5"/>
<path d="M1706.4,1086.3 C1785.9,1086.3 1785.9,1164.5 1865.4,1164.5"/>
<path d="M1706.4,1086.3 C1785.9,1086.3 1785.9,648.5 1865.4,648.5"/>
<path d="M1706.4,1086.3 C1785.9,1086.3 1785.9,2282.5 1865.4,2282.5"/>
<path d="M1701.4,1172.3 C1783.4,1172.3 1783.4,-297.5 1865.4,-297.5"/>
<path d="M1701.4,1172.3 C1783.4,1172.3 1783.4,1680.5 1865.4,1680.5"/>
<path d="M1701.4,1172.3 C1783.4,1172.3 1783.4,2540.5 1865.4,2540.5"/>
<path d="M1712.0,1258.3 C1788.7,1258.3 1788.7,1250.5 1865.4,1250.5"/>
<path d="M1712.0,1258.3 C1788.7,1258.3 1788.7,132.5 1865.4,132.5"/>
<path d="M1712.0,1258.3 C1788.7,1258.3 1788.7,-469.5 1865.4,-469.5"/>
<path d="M1704.6,1344.3 C1785.0,1344.3 1785.0,1594.5 1865.4,1594.5"/>
<path d="M1704.6,1344.3 C1785.0,1344.3 1785.0,2798.5 1865.4,2798.5"/>
<path d="M1705.0,484.3 C1785.2,484.3 1785.2,-727.5 1865.4,-727.5"/>
<path d="M1705.0,484.3 C1785.2,484.3 1785.2,-211.5 1865.4,-211.5"/>
<path d="M1705.0,484.3 C1785.2,484.3 1785.2,2970.5 1865.4,2970.5"/>
<path d="M1705.0,570.3 C1785.2,570.3 1785.2,-641.5 1865.4,-641.5"/>
<path d="M1705.0,570.3 C1785.2,570.3 1785.2,-125.5 1865.4,-125.5"/>
<path d="M1705.0,570.3 C1785.2,570.3 1785.2,304.5 1865.4,304.5"/>
<path d="M1705.0,570.3 C1785.2,570.3 1785.2,1852.5 1865.4,1852.5"/>
<path d="M1705.0,1430.3 C1785.2,1430.3 1785.2,1766.5 1865.4,1766.5"/>
<path d="M1705.0,1430.3 C1785.2,1430.3 1785.2,2196.5 1865.4,2196.5"/>
<path d="M1705.0,1430.3 C1785.2,1430.3 1785.2,46.5 1865.4,46.5"/>
<path d="M1705.0,1430.3 C1785.2,1430.3 1785.2,562.5 1865.4,562.5"/>
<path d="M1705.0,1430.3 C1785.2,1430.3 1785.2,-813.5 1865.4,-813.5"/>
<path d="M1705.0,1516.3 C1785.2,1516.3 1785.2,1938.5 1865.4,1938.5"/>
<path d="M1705.0,1516.3 C1785.2,1516.3 1785.2,2454.5 1865.4,2454.5"/>
<path d="M1705.0,1516.3 C1785.2,1516.3 1785.2,-383.5 1865.4,-383.5"/>
<path d="M1705.0,1516.3 C1785.2,1516.3 1785.2,-899.5 1865.4,-899.5"/>
<path d="M1705.0,1602.3 C1785.2,1602.3 1785.2,2024.5 1865.4,2024.5"/>
<path d="M1705.0,1602.3 C1785.2,1602.3 1785.2,2712.5 1865.4,2712.5"/>
<path d="M1705.0,1602.3 C1785.2,1602.3 1785.2,-985.5 1865.4,-985.5"/>
</g></svg>
<div style="position:absolute;left:831.2px;top:843.0px;width:74.1px;height:41.2px;box-sizing:border-box;border:1px solid #2a2624;border-radius:5px;background:#1c1917"></div>
<span style="position:absolute;left:845.8px;top:858.60px;font-family:'Liberation Sans',sans-serif;font-size:10px;font-weight:400;line-height:1;color:#c9c4bf;white-space:pre;transform-origin:0 0;transform:scaleX(0.8272)">10.42.0.0/24</span>
<div style="position:absolute;left:831.2px;top:929.0px;width:109.4px;height:41.2px;box-sizing:border-box;border:1px solid #2a2624;border-radius:5px;background:#1c1917"></div>
<span style="position:absolute;left:845.8px;top:944.60px;font-family:'Liberation Sans',sans-serif;font-size:10px;font-weight:400;line-height:1;color:#c9c4bf;white-space:pre;transform-origin:0 0;transform:scaleX(0.8252)">2403:5814:3fde:4::/64</span>
<div style="position:absolute;left:831.2px;top:1015.0px;width:61.2px;height:41.2px;box-sizing:border-box;border:1px solid #2a2624;border-radius:5px;background:#1c1917"></div>
<span style="position:absolute;left:845.8px;top:1030.60px;font-family:'Liberation Sans',sans-serif;font-size:10px;font-weight:400;line-height:1;color:#c9c4bf;white-space:pre;transform-origin:0 0;transform:scaleX(0.8530)">fe80::/64</span>
<div style="position:absolute;left:831.2px;top:1101.0px;width:82.9px;height:41.2px;box-sizing:border-box;border:1px solid #2a2624;border-radius:5px;background:#1c1917"></div>
<span style="position:absolute;left:845.8px;top:1116.60px;font-family:'Liberation Sans',sans-serif;font-size:10px;font-weight:400;line-height:1;color:#c9c4bf;white-space:pre;transform-origin:0 0;transform:scaleX(0.8287)">192.168.5.0/24</span>
<div style="position:absolute;left:831.2px;top:1187.0px;width:74.1px;height:41.2px;box-sizing:border-box;border:1px solid #2a2624;border-radius:5px;background:#1c1917"></div>
<span style="position:absolute;left:845.8px;top:1202.60px;font-family:'Liberation Sans',sans-serif;font-size:10px;font-weight:400;line-height:1;color:#c9c4bf;white-space:pre;transform-origin:0 0;transform:scaleX(0.8200)">10.42.0.0/32</span>
<div style="position:absolute;left:1176.2px;top:1014.8px;width:188.4px;height:58.0px;box-sizing:border-box;border:1px solid #2a2624;border-radius:5px;background:#1c1917"></div>
<span style="position:absolute;left:1189.7px;top:1031.92px;font-family:'Liberation Sans',sans-serif;font-size:9.5px;font-weight:700;line-height:1;color:#f5f5f4;white-space:pre;transform-origin:0 0;transform:scaleX(0.9469)">prime</span>
<span style="position:absolute;left:1190.0px;top:1046.92px;font-family:'Liberation Sans',sans-serif;font-size:9.5px;font-weight:400;line-height:1;color:#a8a29e;white-space:pre;transform-origin:0 0;transform:scaleX(0.8917)">1565f0b9-37a9-4460-a215-eba294267a81</span>
<div style="position:absolute;left:1520.6px;top:627.3px;width:184.9px;height:58.0px;box-sizing:border-box;border:1px solid #2a2624;border-radius:5px;background:#1c1917"></div>
<span style="position:absolute;left:1534.9px;top:643.92px;font-family:'Liberation Sans',sans-serif;font-size:9.5px;font-weight:700;line-height:1;color:#f5f5f4;white-space:pre;transform-origin:0 0;transform:scaleX(0.9410)">prime-worker-us-0</span>
<span style="position:absolute;left:1534.9px;top:660.02px;font-family:'Liberation Sans',sans-serif;font-size:9.5px;font-weight:400;line-height:1;color:#a8a29e;white-space:pre;transform-origin:0 0;transform:scaleX(0.8838)">a1b2c3d4-1111-4a2b-9c3d-5e6f7a8b9c0d</span>
<div style="position:absolute;left:1520.6px;top:713.3px;width:179.0px;height:58.0px;box-sizing:border-box;border:1px solid #2a2624;border-radius:5px;background:#1c1917"></div>
<span style="position:absolute;left:1534.9px;top:729.92px;font-family:'Liberation Sans',sans-serif;font-size:9.5px;font-weight:700;line-height:1;color:#f5f5f4;white-space:pre;transform-origin:0 0;transform:scaleX(0.9446)">prime-worker-sg-0</span>
<span style="position:absolute;left:1534.9px;top:746.02px;font-family:'Liberation Sans',sans-serif;font-size:9.5px;font-weight:400;line-height:1;color:#a8a29e;white-space:pre;transform-origin:0 0;transform:scaleX(0.9036)">7f8f13af-10e6-48e6-b410-9cf574c091f8</span>
<div style="position:absolute;left:1520.6px;top:799.3px;width:176.9px;height:58.0px;box-sizing:border-box;border:1px solid #2a2624;border-radius:5px;background:#1c1917"></div>
<span style="position:absolute;left:1534.9px;top:815.92px;font-family:'Liberation Sans',sans-serif;font-size:9.5px;font-weight:700;line-height:1;color:#f5f5f4;white-space:pre;transform-origin:0 0;transform:scaleX(0.9604)">prime-worker-tw-0</span>
<span style="position:absolute;left:1534.9px;top:832.02px;font-family:'Liberation Sans',sans-serif;font-size:9.5px;font-weight:400;line-height:1;color:#a8a29e;white-space:pre;transform-origin:0 0;transform:scaleX(0.9090)">24893c2f-578c-4e54-8fae-fff6c957fbd8</span>
<div style="position:absolute;left:1520.6px;top:885.3px;width:188.8px;height:58.0px;box-sizing:border-box;border:1px solid #2a2624;border-radius:5px;background:#1c1917"></div>
<span style="position:absolute;left:1534.9px;top:901.92px;font-family:'Liberation Sans',sans-serif;font-size:9.5px;font-weight:700;line-height:1;color:#f5f5f4;white-space:pre;transform-origin:0 0;transform:scaleX(0.9506)">prime-worker-za-0</span>
<span style="position:absolute;left:1534.9px;top:918.02px;font-family:'Liberation Sans',sans-serif;font-size:9.5px;font-weight:400;line-height:1;color:#a8a29e;white-space:pre;transform-origin:0 0;transform:scaleX(0.8966)">c48e469e-2075-4196-814d-2972eab04f4d</span>
<div style="position:absolute;left:1520.6px;top:971.3px;width:188.8px;height:58.0px;box-sizing:border-box;border:1px solid #2a2624;border-radius:5px;background:#1c1917"></div>
<span style="position:absolute;left:1534.9px;top:987.92px;font-family:'Liberation Sans',sans-serif;font-size:9.5px;font-weight:700;line-height:1;color:#f5f5f4;white-space:pre;transform-origin:0 0;transform:scaleX(0.9507)">prime-worker-br-0</span>
<span style="position:absolute;left:1534.9px;top:1004.02px;font-family:'Liberation Sans',sans-serif;font-size:9.5px;font-weight:400;line-height:1;color:#a8a29e;white-space:pre;transform-origin:0 0;transform:scaleX(0.9066)">0f33ebdc-bb4c-486c-8508-d32797b01448</span>
<div style="position:absolute;left:1520.6px;top:1057.3px;width:185.8px;height:58.0px;box-sizing:border-box;border:1px solid #2a2624;border-radius:5px;background:#1c1917"></div>
<span style="position:absolute;left:1534.9px;top:1073.92px;font-family:'Liberation Sans',sans-serif;font-size:9.5px;font-weight:700;line-height:1;color:#f5f5f4;white-space:pre;transform-origin:0 0;transform:scaleX(0.9483)">prime-worker-jp-0</span>
<span style="position:absolute;left:1534.9px;top:1090.02px;font-family:'Liberation Sans',sans-serif;font-size:9.5px;font-weight:400;line-height:1;color:#a8a29e;white-space:pre;transform-origin:0 0;transform:scaleX(0.9057)">551fb939-6196-48a7-942c-211b0f2c96d3</span>
<div style="position:absolute;left:1520.6px;top:1143.3px;width:180.8px;height:58.0px;box-sizing:border-box;border:1px solid #2a2624;border-radius:5px;background:#1c1917"></div>
<span style="position:absolute;left:1534.9px;top:1159.92px;font-family:'Liberation Sans',sans-serif;font-size:9.5px;font-weight:700;line-height:1;color:#f5f5f4;white-space:pre;transform-origin:0 0;transform:scaleX(0.9507)">prime-worker-be-0</span>
<span style="position:absolute;left:1534.9px;top:1176.02px;font-family:'Liberation Sans',sans-serif;font-size:9.5px;font-weight:400;line-height:1;color:#a8a29e;white-space:pre;transform-origin:0 0;transform:scaleX(0.9038)">ed0e294a-e660-4fda-b67f-faadfa625f2e</span>
<div style="position:absolute;left:1520.6px;top:1229.3px;width:191.4px;height:58.0px;box-sizing:border-box;border:1px solid #2a2624;border-radius:5px;background:#1c1917"></div>
<span style="position:absolute;left:1534.9px;top:1245.92px;font-family:'Liberation Sans',sans-serif;font-size:9.5px;font-weight:700;line-height:1;color:#f5f5f4;white-space:pre;transform-origin:0 0;transform:scaleX(0.9483)">prime-worker-pl-0</span>
<span style="position:absolute;left:1534.9px;top:1262.02px;font-family:'Liberation Sans',sans-serif;font-size:9.5px;font-weight:400;line-height:1;color:#a8a29e;white-space:pre;transform-origin:0 0;transform:scaleX(0.9050)">dc870304-190b-45ce-9647-b0b3bb13a8b8</span>
<div style="position:absolute;left:1520.6px;top:1315.3px;width:184.0px;height:58.0px;box-sizing:border-box;border:1px solid #2a2624;border-radius:5px;background:#1c1917"></div>
<span style="position:absolute;left:1534.9px;top:1331.92px;font-family:'Liberation Sans',sans-serif;font-size:9.5px;font-weight:700;line-height:1;color:#f5f5f4;white-space:pre;transform-origin:0 0;transform:scaleX(0.9507)">prime-worker-de-0</span>
<span style="position:absolute;left:1534.9px;top:1348.02px;font-family:'Liberation Sans',sans-serif;font-size:9.5px;font-weight:400;line-height:1;color:#a8a29e;white-space:pre;transform-origin:0 0;transform:scaleX(0.9020)">d890de9b-0640-4e5a-93f5-9c4f1c7554f2</span>
<div style="position:absolute;left:1865.4px;top:627.5px;width:82.6px;height:42.0px;box-sizing:border-box;border:1px solid #2a2624;border-radius:5px;background:#1c1917"></div>
<span style="position:absolute;left:1879.7px;top:643.50px;font-family:'Liberation Sans',sans-serif;font-size:10px;font-weight:400;line-height:1;color:#c9c4bf;white-space:pre;transform-origin:0 0;transform:scaleX(0.9890)">10.42.9.0/32</span>
<div style="position:absolute;left:1865.4px;top:713.5px;width:78.2px;height:42.0px;box-sizing:border-box;border:1px solid #2a2624;border-radius:5px;background:#1c1917"></div>
<span style="position:absolute;left:1879.7px;top:729.50px;font-family:'Liberation Sans',sans-serif;font-size:10px;font-weight:400;line-height:1;color:#c9c4bf;white-space:pre;transform-origin:0 0;transform:scaleX(0.8323)">10.42.11.0/32</span>
<div style="position:absolute;left:1865.4px;top:799.5px;width:74.4px;height:42.0px;box-sizing:border-box;border:1px solid #2a2624;border-radius:5px;background:#1c1917"></div>
<span style="position:absolute;left:1879.7px;top:815.50px;font-family:'Liberation Sans',sans-serif;font-size:10px;font-weight:400;line-height:1;color:#c9c4bf;white-space:pre;transform-origin:0 0;transform:scaleX(0.8254)">10.42.1.0/32</span>
<div style="position:absolute;left:1865.4px;top:885.5px;width:73.8px;height:42.0px;box-sizing:border-box;border:1px solid #2a2624;border-radius:5px;background:#1c1917"></div>
<span style="position:absolute;left:1879.7px;top:901.50px;font-family:'Liberation Sans',sans-serif;font-size:10px;font-weight:400;line-height:1;color:#c9c4bf;white-space:pre;transform-origin:0 0;transform:scaleX(0.8218)">10.42.1.0/24</span>
<div style="position:absolute;left:1865.4px;top:971.5px;width:82.6px;height:42.0px;box-sizing:border-box;border:1px solid #2a2624;border-radius:5px;background:#1c1917"></div>
<span style="position:absolute;left:1879.7px;top:987.50px;font-family:'Liberation Sans',sans-serif;font-size:10px;font-weight:400;line-height:1;color:#c9c4bf;white-space:pre;transform-origin:0 0;transform:scaleX(0.8197)">10.140.0.26/32</span>
<div style="position:absolute;left:1865.4px;top:1057.5px;width:196.2px;height:42.0px;box-sizing:border-box;border:1px solid #2a2624;border-radius:5px;background:#1c1917"></div>
<span style="position:absolute;left:1879.7px;top:1073.50px;font-family:'Liberation Sans',sans-serif;font-size:10px;font-weight:400;line-height:1;color:#c9c4bf;white-space:pre;transform-origin:0 0;transform:scaleX(0.8197)">2600:1f14:67a:3a00:a1e6:c13e:51af:88ea/128</span>
<div style="position:absolute;left:1865.4px;top:1143.5px;width:73.7px;height:42.0px;box-sizing:border-box;border:1px solid #2a2624;border-radius:5px;background:#1c1917"></div>
<span style="position:absolute;left:1879.7px;top:1159.50px;font-family:'Liberation Sans',sans-serif;font-size:10px;font-weight:400;line-height:1;color:#c9c4bf;white-space:pre;transform-origin:0 0;transform:scaleX(0.8164)">10.42.6.0/32</span>
<div style="position:absolute;left:1865.4px;top:1229.5px;width:82.8px;height:42.0px;box-sizing:border-box;border:1px solid #2a2624;border-radius:5px;background:#1c1917"></div>
<span style="position:absolute;left:1879.7px;top:1245.50px;font-family:'Liberation Sans',sans-serif;font-size:10px;font-weight:400;line-height:1;color:#c9c4bf;white-space:pre;transform-origin:0 0;transform:scaleX(0.8182)">10.186.0.18/32</span>
<div style="position:absolute;left:1865.4px;top:1315.5px;width:77.7px;height:42.0px;box-sizing:border-box;border:1px solid #2a2624;border-radius:5px;background:#1c1917"></div>
<span style="position:absolute;left:1879.7px;top:1331.50px;font-family:'Liberation Sans',sans-serif;font-size:10px;font-weight:400;line-height:1;color:#c9c4bf;white-space:pre;transform-origin:0 0;transform:scaleX(0.8323)">10.42.11.0/24</span>
<svg style="position:absolute;left:0;top:0" width="2560" height="1392">
<circle cx="905.3" cy="863.6" r="1.8" fill="#1c1917" stroke="#c8c2bd" stroke-width="1.2"/>
<circle cx="940.6" cy="949.6" r="1.8" fill="#1c1917" stroke="#c8c2bd" stroke-width="1.2"/>
<circle cx="892.4" cy="1035.6" r="1.8" fill="#1c1917" stroke="#c8c2bd" stroke-width="1.2"/>
<circle cx="914.1" cy="1121.6" r="1.8" fill="#1c1917" stroke="#c8c2bd" stroke-width="1.2"/>
<circle cx="905.3" cy="1207.6" r="1.8" fill="#1c1917" stroke="#c8c2bd" stroke-width="1.2"/>
<circle cx="1176.2" cy="1043.8" r="1.8" fill="#1c1917" stroke="#c8c2bd" stroke-width="1.2"/>
<circle cx="1364.6" cy="1043.8" r="1.8" fill="#1c1917" stroke="#c8c2bd" stroke-width="1.2"/>
<circle cx="1520.6" cy="656.3" r="1.8" fill="#1c1917" stroke="#c8c2bd" stroke-width="1.2"/>
<circle cx="1705.5" cy="656.3" r="1.8" fill="#1c1917" stroke="#c8c2bd" stroke-width="1.2"/>
<circle cx="1520.6" cy="742.3" r="1.8" fill="#1c1917" stroke="#c8c2bd" stroke-width="1.2"/>
<circle cx="1699.6" cy="742.3" r="1.8" fill="#1c1917" stroke="#c8c2bd" stroke-width="1.2"/>
<circle cx="1520.6" cy="828.3" r="1.8" fill="#1c1917" stroke="#c8c2bd" stroke-width="1.2"/>
<circle cx="1697.5" cy="828.3" r="1.8" fill="#1c1917" stroke="#c8c2bd" stroke-width="1.2"/>
<circle cx="1520.6" cy="914.3" r="1.8" fill="#1c1917" stroke="#c8c2bd" stroke-width="1.2"/>
<circle cx="1709.4" cy="914.3" r="1.8" fill="#1c1917" stroke="#c8c2bd" stroke-width="1.2"/>
<circle cx="1520.6" cy="1000.3" r="1.8" fill="#1c1917" stroke="#c8c2bd" stroke-width="1.2"/>
<circle cx="1709.4" cy="1000.3" r="1.8" fill="#1c1917" stroke="#c8c2bd" stroke-width="1.2"/>
<circle cx="1520.6" cy="1086.3" r="1.8" fill="#1c1917" stroke="#c8c2bd" stroke-width="1.2"/>
<circle cx="1706.4" cy="1086.3" r="1.8" fill="#1c1917" stroke="#c8c2bd" stroke-width="1.2"/>
<circle cx="1520.6" cy="1172.3" r="1.8" fill="#1c1917" stroke="#c8c2bd" stroke-width="1.2"/>
<circle cx="1701.4" cy="1172.3" r="1.8" fill="#1c1917" stroke="#c8c2bd" stroke-width="1.2"/>
<circle cx="1520.6" cy="1258.3" r="1.8" fill="#1c1917" stroke="#c8c2bd" stroke-width="1.2"/>
<circle cx="1712.0" cy="1258.3" r="1.8" fill="#1c1917" stroke="#c8c2bd" stroke-width="1.2"/>
<circle cx="1520.6" cy="1344.3" r="1.8" fill="#1c1917" stroke="#c8c2bd" stroke-width="1.2"/>
<circle cx="1704.6" cy="1344.3" r="1.8" fill="#1c1917" stroke="#c8c2bd" stroke-width="1.2"/>
<circle cx="1865.4" cy="648.5" r="1.8" fill="#1c1917" stroke="#c8c2bd" stroke-width="1.2"/>
<circle cx="1865.4" cy="734.5" r="1.8" fill="#1c1917" stroke="#c8c2bd" stroke-width="1.2"/>
<circle cx="1865.4" cy="820.5" r="1.8" fill="#1c1917" stroke="#c8c2bd" stroke-width="1.2"/>
<circle cx="1865.4" cy="906.5" r="1.8" fill="#1c1917" stroke="#c8c2bd" stroke-width="1.2"/>
<circle cx="1865.4" cy="992.5" r="1.8" fill="#1c1917" stroke="#c8c2bd" stroke-width="1.2"/>
<circle cx="1865.4" cy="1078.5" r="1.8" fill="#1c1917" stroke="#c8c2bd" stroke-width="1.2"/>
<circle cx="1865.4" cy="1164.5" r="1.8" fill="#1c1917" stroke="#c8c2bd" stroke-width="1.2"/>
<circle cx="1865.4" cy="1250.5" r="1.8" fill="#1c1917" stroke="#c8c2bd" stroke-width="1.2"/>
<circle cx="1865.4" cy="1336.5" r="1.8" fill="#1c1917" stroke="#c8c2bd" stroke-width="1.2"/>
</svg>
</div></div>
<div style="position:absolute;left:423px;top:682px;width:26px;height:108px;background:#fefefe;box-shadow:0 0 2px 1px rgba(0,0,0,0.08)"></div>
<div style="position:absolute;left:424px;top:709px;width:24px;height:1px;background:#eeeeee"></div>
<div style="position:absolute;left:424px;top:736px;width:24px;height:1px;background:#eeeeee"></div>
<div style="position:absolute;left:424px;top:763px;width:24px;height:1px;background:#eeeeee"></div>
<svg style="position:absolute;left:423px;top:682px" width="26" height="108" viewBox="0 0 26 108"><path d="M13 8 V19 M7.5 13.5 H18.5" stroke="#1a1a1a" stroke-width="1.4"/><path d="M7.5 40 H18.5" stroke="#1a1a1a" stroke-width="1.4"/><path d="M7.5 64 V61 H10.5 M15.5 61 H18.5 V64 M18.5 68 V71 H15.5 M10.5 71 H7.5 V68" fill="none" stroke="#1a1a1a" stroke-width="1.3"/><path d="M10 93 V91 A3 3 0 0 1 16 91 V93" fill="none" stroke="#000" stroke-width="1.3"/><rect x="8.5" y="93" width="9" height="7" rx="1" fill="#000"/><rect x="12" y="95.5" width="2" height="2" fill="#fff"/></svg></div></body></html>
